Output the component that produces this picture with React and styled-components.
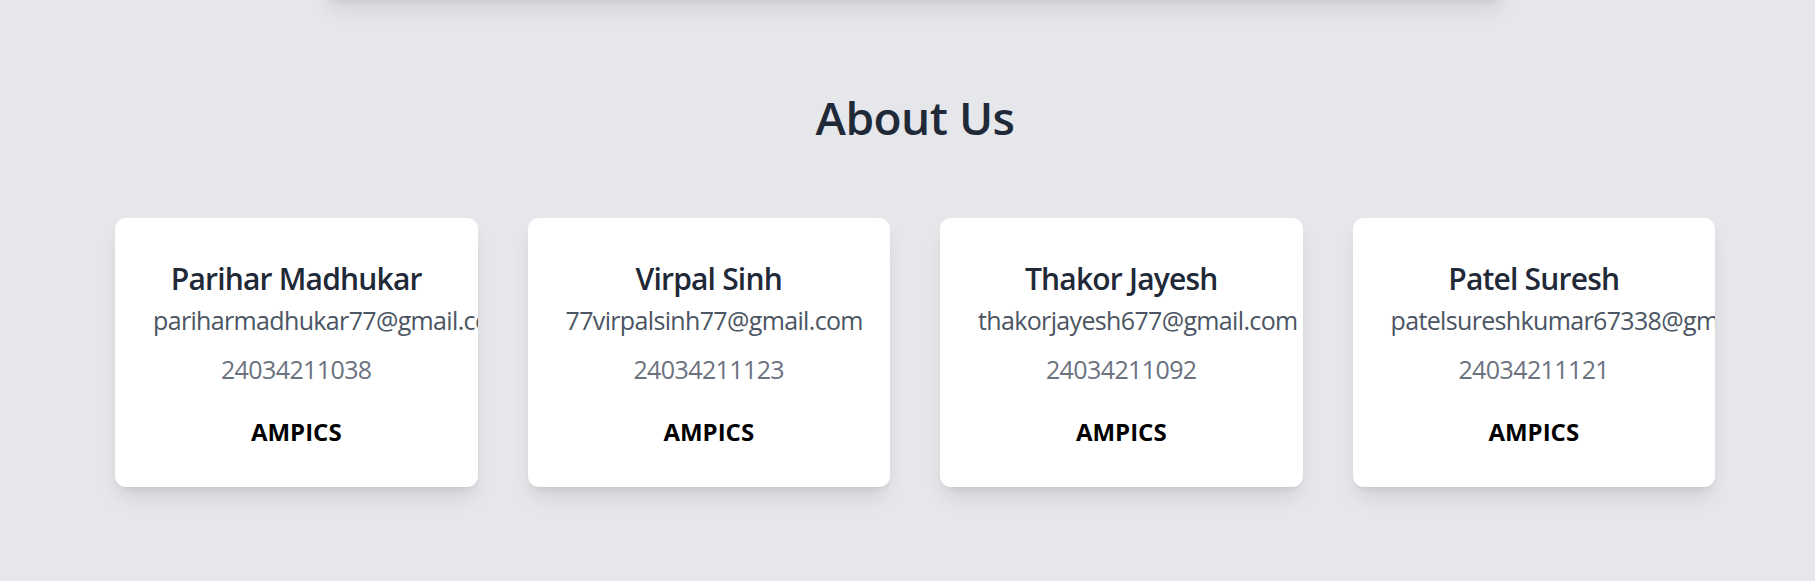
import React from "react";
import styled, { createGlobalStyle } from "styled-components";

const members = [
    { name: "Parihar Madhukar", email: "pariharmadhukar77@gmail.com", id: "24034211038" },
    { name: "Virpal Sinh", email: "77virpalsinh77@gmail.com", id: "24034211123" },
    { name: "Thakor Jayesh", email: "thakorjayesh677@gmail.com", id: "24034211092" },
    { name: "Patel Suresh", email: "patelsureshkumar67338@gmail.com", id: "24034211121" },
];

export default function App() {
    return (
        <>
            <GlobalStyle />
            <Page>
                <TopPanel />
                <Heading>About Us</Heading>
                <Grid>
                    {members.map((m) => (
                        <Card key={m.id}>
                            <Name>{m.name}</Name>
                            <Email>{m.email}</Email>
                            <Enrollment>{m.id}</Enrollment>
                            <College>AMPICS</College>
                        </Card>
                    ))}
                </Grid>
            </Page>
        </>
    );
}

const GlobalStyle = createGlobalStyle`
    html, body {
        margin: 0;
        padding: 0;
        background: #e5e7eb;
    }
    body {
        font-family: "Open Sans", "Noto Sans", sans-serif;
    }
`;

const Page = styled.main`
    min-height: 581px;
    padding: 0 100px 0 115px;
    box-sizing: border-box;
    overflow: hidden;
`;

const TopPanel = styled.div`
    max-width: 1181px;
    height: 40px;
    margin: -40px auto 0;
    border-radius: 10px;
    background: #e5e7eb;
    box-shadow: 0 13px 20px -4px rgba(0, 0, 0, 0.09), 0 5px 8px -5px rgba(0, 0, 0, 0.08);
`;

const Heading = styled.h2`
    margin: 91px 0 0;
    font-size: 46px;
    line-height: 53px;
    letter-spacing: -0.5px;
    font-weight: 600;
    color: #1f2937;
    text-align: center;
`;

const Grid = styled.section`
    display: grid;
    grid-template-columns: repeat(4, 1fr);
    gap: 50px;
    margin-top: 74px;
`;

const Card = styled.div`
    background: #ffffff;
    border-radius: 11px;
    padding: 39px 38px 37px;
    overflow: hidden;
    text-align: center;
    box-shadow: 0 13px 20px -4px rgba(0, 0, 0, 0.1), 0 5px 8px -5px rgba(0, 0, 0, 0.1);
`;

const Name = styled.h3`
    margin: 0 0 2px;
    font-size: 30px;
    line-height: 43px;
    letter-spacing: -0.8px;
    font-weight: 600;
    color: #1f2937;
`;

const Email = styled.p`
    margin: 0;
    font-size: 25px;
    line-height: 37px;
    letter-spacing: -0.65px;
    color: #4b5563;
    white-space: nowrap;
`;

const Enrollment = styled.p`
    margin: 12px 0 0;
    font-size: 25px;
    line-height: 37px;
    letter-spacing: -0.6px;
    color: #6b7280;
`;

const College = styled.p`
    margin: 25px 0 0;
    font-size: 24px;
    line-height: 37px;
    font-weight: 700;
    color: #000000;
`;
